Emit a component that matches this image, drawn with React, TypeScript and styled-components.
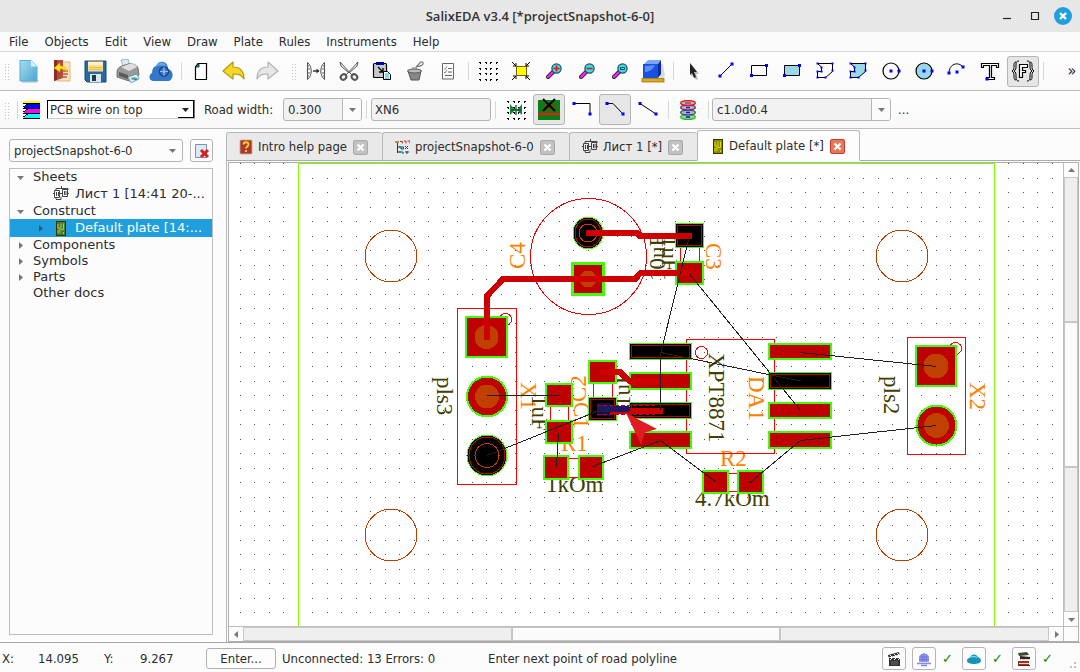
import React from 'react';
import styled, { createGlobalStyle, css } from 'styled-components';

const UI = '"DejaVu Sans Condensed", "DejaVu Sans", sans-serif';
const WIDE = '"DejaVu Sans", sans-serif';
const SERIF = '"Liberation Serif", "Times New Roman", serif';

const Global = createGlobalStyle`
  * { box-sizing: border-box; }
  html, body, #root { height: 100%; margin: 0; }
  body { background: #fcfcfc; color: #2c2c2c; font: 13px/16px ${UI}; overflow: hidden; }
  button, input, select { font: inherit; color: inherit; }
  button { padding: 0; border: 0; background: none; }
  svg { display: block; }
`;

const Window = styled.div`
  display: flex;
  flex-direction: column;
  height: 100vh;
`;

const TitleBar = styled.header`
  position: relative;
  display: flex;
  align-items: center;
  justify-content: center;
  flex: none;
  height: 32px;
  background: #e7e7e7;
`;

const Title = styled.h1`
  margin: 0;
  font: 600 13px/16px "Open Sans", sans-serif;
  color: #333;
`;

const WindowButtons = styled.div`
  position: absolute;
  right: 8px;
  top: 7px;
  display: flex;
  gap: 10px;
`;

const WindowButton = styled.button<{ $close?: boolean }>`
  width: 18px;
  height: 18px;
  border-radius: 9px;
  background: ${p => (p.$close ? '#209fdf' : 'transparent')};
`;

const MenuBar = styled.nav`
  display: flex;
  flex: none;
  align-items: center;
  gap: 16px;
  height: 20px;
  padding-left: 9px;
  border-bottom: 1px solid #d6d6d6;
  background: #fbfbfb;
`;

const MenuButton = styled.button`
  height: 16px;
`;

const Toolbar = styled.div<{ $short?: boolean }>`
  display: flex;
  flex: none;
  align-items: center;
  height: ${p => (p.$short ? 38 : 39)}px;
  padding-left: 5px;
  border-bottom: 1px solid #bdbdbd;
  background: linear-gradient(#fefefe, #f9f9f9);
`;

const Grip = styled.span<{ $inner?: boolean }>`
  flex: none;
  width: 5px;
  height: 18px;
  margin: ${p => (p.$inner ? '0 3px 0 8px' : '0 3px 0 0')};
  background-image: linear-gradient(#fcfcfc 2px, transparent 2px), linear-gradient(90deg, #c4c4c4 1px, transparent 1px);
  background-size: 3px 3px;
`;

const Divider = styled.span<{ $gap?: number }>`
  flex: none;
  width: 1px;
  height: 18px;
  margin: 0 ${p => p.$gap ?? 3}px;
  background: #d8d8d8;
`;

const IconButton = styled.button<{ $on?: boolean }>`
  display: flex;
  flex: none;
  align-items: center;
  justify-content: center;
  width: 32px;
  height: 31px;
  margin-right: 1px;
  border-radius: 3px;
  ${p => p.$on && css`
    border: 1px solid #b4b4b4;
    background: #e6e6e6;
  `}
`;

const Overflow = styled.button`
  width: 16px;
  height: 24px;
  margin-left: auto;
  font: 16px/20px ${UI};
`;

const LayerSelect = styled.select`
  width: 148px;
  height: 19px;
  margin-left: 7px;
  padding: 0 2px;
  appearance: none;
  border: 1px solid #000;
  border-right-color: #777;
  border-bottom-color: #ccc;
  border-radius: 0;
  background: #fff;
`;

const ComboBox = styled.span<{ $width: number }>`
  position: relative;
  display: flex;
  flex: none;
  width: ${p => p.$width}px;
`;

const ComboArrow = styled.span<{ $split?: boolean; $raised?: boolean }>`
  position: absolute;
  top: 1px;
  right: 1px;
  bottom: 1px;
  display: flex;
  align-items: center;
  justify-content: center;
  width: ${p => (p.$raised ? 16 : 19)}px;
  pointer-events: none;
  color: #777;
  ${p => p.$split && css`
    border-left: 1px solid #b8b8b8;
    background: #fbfbfb;
    border-radius: 0 2px 2px 0;
  `}
  ${p => p.$raised && css`
    color: #222;
    border-right: 1px solid #000;
    border-bottom: 1px solid #000;
    background: #fff;
  `}
`;

const Select = styled.select<{ $white?: boolean }>`
  width: 100%;
  height: 23px;
  padding: 0 4px;
  appearance: none;
  border: 1px solid #b4b4b4;
  border-radius: 3px;
  background: ${p => (p.$white ? '#fcfcfc' : '#f2f2f2')};
`;

const TextBox = styled.input`
  width: 120px;
  height: 23px;
  padding: 0 3px;
  border: 1px solid #b4b4b4;
  border-radius: 3px;
  background: #f2f2f2;
`;

const FieldLabel = styled.label`
  margin: 0 9px;
  width: 70px;
  white-space: nowrap;
`;

const MoreButton = styled.button`
  margin-left: 7px;
`;

const Main = styled.main`
  display: flex;
  flex: 1;
  min-height: 0;
`;

const SidePanel = styled.aside`
  display: flex;
  flex-direction: column;
  flex: none;
  width: 226px;
  padding: 10px 13px 7px 9px;
`;

const SnapshotRow = styled.div`
  display: flex;
  gap: 7px;
  margin-bottom: 6px;
`;

const SmallButton = styled.button`
  display: flex;
  align-items: center;
  justify-content: center;
  width: 24px;
  height: 23px;
  border: 1px solid #b4b4b4;
  border-radius: 3px;
  background: #fdfdfd;
`;

const Tree = styled.ul`
  flex: 1;
  margin: 0;
  padding: 0;
  list-style: none;
  border: 1px solid #bdbdbd;
  background: #fcfcfc;
  font: 13px/16px ${WIDE};
`;

const TreeRow = styled.li<{ $level: number; $selected?: boolean; $icon?: boolean }>`
  display: flex;
  align-items: center;
  height: ${p => (p.$icon ? 18 : 16)}px;
  padding-left: ${p => p.$level * 20 + 5}px;
  color: ${p => (p.$selected ? '#fff' : 'inherit')};
  background: ${p => (p.$selected ? '#209fdf' : 'transparent')};
`;

const TreeArrow = styled.span<{ $dark?: boolean }>`
  flex: none;
  display: flex;
  justify-content: center;
  width: 10px;
  margin-right: 8px;
  color: ${p => (p.$dark ? '#1b5f86' : '#777')};
`;

const TreeIcon = styled.span`
  flex: none;
  display: flex;
  justify-content: center;
  width: 16px;
  margin-right: 6px;
`;

const TreeText = styled.span`
  white-space: nowrap;
`;

const Editor = styled.section`
  display: flex;
  flex-direction: column;
  flex: 1;
  min-width: 0;
`;

const TabBar = styled.div`
  display: flex;
  flex: none;
  align-items: flex-end;
  height: 32px;
  box-shadow: inset 0 -1px #acacac;
`;

const Tab = styled.div<{ $active?: boolean }>`
  display: flex;
  align-items: center;
  gap: 6px;
  height: ${p => (p.$active ? 31 : 29)}px;
  padding: ${p => (p.$active ? '1px 14px 0 14px' : '1px 14px 0 12px')};
  border: 1px solid #b8b8b8;
  border-right-width: ${p => (p.$active ? 1 : 0)}px;
  border-bottom-color: ${p => (p.$active ? '#fff' : '#acacac')};
  border-radius: 3px 3px 0 0;
  background: ${p => (p.$active ? '#fdfdfd' : '#e9e9e9')};
`;

const TabLabel = styled.button`
  display: flex;
  align-items: center;
  gap: 5px;
  white-space: nowrap;
`;

const CloseTab = styled.button<{ $hot?: boolean }>`
  display: flex;
  align-items: center;
  justify-content: center;
  width: 15px;
  height: 15px;
  border: 1px solid ${p => (p.$hot ? '#cc3b2a' : '#a8a8a8')};
  border-radius: 2px;
  background: ${p => (p.$hot ? '#e07a58' : '#c2c2c2')};
`;

const Pane = styled.div`
  display: flex;
  flex: 1;
  min-height: 0;
  padding: 1px 1px 0;
  border-left: 1px solid #b8b8b8;
`;

const ScrollArea = styled.div`
  display: grid;
  flex: 1;
  min-width: 0;
  grid-template-columns: minmax(0, 1fr) 15px;
  grid-template-rows: minmax(0, 1fr) 15px;
  border: 1px solid #b0b0b0;
  background: #fff;
`;

const Board = styled.svg`
  width: 100%;
  height: 100%;
  overflow: hidden;
`;

const Scrollbar = styled.div<{ $vertical?: boolean }>`
  display: flex;
  flex-direction: ${p => (p.$vertical ? 'column' : 'row')};
  background: #efefef;
  border: 0 solid #bdbdbd;
  border-left-width: ${p => (p.$vertical ? 1 : 0)}px;
  border-top-width: ${p => (p.$vertical ? 0 : 1)}px;
`;

const ScrollButton = styled.button`
  display: flex;
  flex: none;
  align-items: center;
  justify-content: center;
  width: 14px;
  height: 14px;
  background: #fcfcfc;
  color: #777;
`;

const ScrollTrack = styled.div`
  flex: 1;
  box-shadow: inset 0 0 0 1px #c8c8c8;
`;

const ScrollThumb = styled.div`
  flex: 1;
  background: #fbfbfb;
  box-shadow: inset 0 0 0 1px #c4c4c4;
`;

const ScrollCorner = styled.div`
  border: 1px solid #bdbdbd;
  border-width: 1px 0 0 1px;
  background: #fcfcfc;
`;

const StatusBar = styled.footer`
  display: flex;
  flex: none;
  align-items: center;
  height: 30px;
  padding: 2px 2px 0;
  border-top: 1px solid #a8a8a8;
`;

const StatusText = styled.span<{ $width: number }>`
  flex: none;
  width: ${p => p.$width}px;
  white-space: nowrap;
`;

const EnterButton = styled.button`
  width: 70px;
  height: 21px;
  margin-right: 6px;
  border: 1px solid #b0b0b0;
  border-radius: 3px;
  background: #fdfdfd;
`;

const StatusTools = styled.div`
  display: flex;
  align-items: center;
  gap: 6px;
  margin-left: auto;
`;

const Check = styled.span`
  width: 14px;
  color: #0a820a;
  font: bold 13px/16px ${WIDE};
`;

const SizeGrip = styled.span`
  align-self: flex-end;
  width: 16px;
  height: 12px;
  background-image: radial-gradient(circle at 1px 1px, #c0c0c0 1px, transparent 1px);
  background-size: 4px 4px;
  clip-path: polygon(100% 0, 100% 100%, 20% 100%);
`;

const Ico = ({ children, s = 24 }: { children: React.ReactNode; s?: number }) => (
  <svg width={s} height={s} viewBox={`0 0 ${s} ${s}`} fill="none" aria-hidden="true">{children}</svg>
);

const Triangle = ({ dir = 'down' }: { dir?: 'down' | 'up' | 'left' | 'right' }) => {
  const d = { down: 'M1 3h7l-3.5 4z', up: 'M1 6h7L4.500 2z', left: 'M6 1v7L2 4.500z', right: 'M3 1v7l4-3.500z' }[dir];
  return <svg width="9" height="9" viewBox="0 0 9 9"><path d={d} fill="currentColor" /></svg>;
};

const Knots = ({ at }: { at: number[][] }) => (
  <>{at.map(([x, y], i) => <rect key={i} x={x - 1.5} y={y - 1.5} width="3" height="3" fill="#0000ff" />)}</>
);

const Dots = () => (
  <g fill="#000" shapeRendering="crispEdges">
    {[3, 9, 14, 20].map(x => [3, 9, 14, 20].map(y => <path key={`${x}-${y}`} d={`M${x} ${y}h2v1h-2zM${x + (x < 10 ? 1 : 0)} ${y + 1}h1v1h-1z`} />))}
  </g>
);

const NewDoc = () => (
  <Ico>
    <defs><linearGradient id="nd" x1="0" y1="0" x2="1" y2="1"><stop stopColor="#a8dcf2" /><stop offset="1" stopColor="#4ba6cf" /></linearGradient></defs>
    <path d="M4 21h18l-2 3H5z" fill="#bbb" opacity=".6" />
    <path d="M3 1.500h11l6 6v14.500H3z" fill="url(#nd)" stroke="#59aed4" /><path d="M14 1.500v6h6z" fill="#d8f0fa" />
  </Ico>
);
const OpenDoc = () => (
  <Ico>
    <path d="M7 3h13v19H7z" fill="#f6e2bb" stroke="#e0b878" /><path d="M4 1h9v18l-9 3z" fill="#b0483c" /><path d="M4 1h3v20l-3 1z" fill="#8a2c26" />
    <path d="M12 12h6M12 15h6M12 18h5" stroke="#c4583a" strokeWidth="1.300" /><path d="M4 9l6-5v3c5 0 7 2 7 6-2-3-4-3-7-3v3z" fill="#ffe21a" stroke="#d8a800" strokeWidth=".6" />
  </Ico>
);
const Save = () => (
  <Ico>
    <path d="M2 2h21v21H4l-2-2z" fill="#2468a4" stroke="#174a78" /><path d="M5 2.500h15v10H5z" fill="#fbe08b" /><path d="M5 3h15v3H5z" fill="#fff2bd" /><path d="M6 8.500h13M6 10.500h13" stroke="#e6b94e" />
    <path d="M7 15h11v8H7z" fill="#dfe5ec" /><path d="M9 16h4v6H9z" fill="#1c3a57" />
  </Ico>
);
const Print = () => (
  <Ico>
    <path d="M5 1l7-1 2 8-6 2z" fill="#dcebf6" stroke="#8da2b5" strokeWidth=".8" /><path d="M1 13c0-3 2-5 5-6l6-2c4-1 9 1 10 4l1 7-10 6L1 18z" fill="#9a9a9a" stroke="#5c5c5c" strokeWidth=".8" />
    <path d="M5 8l8-3c4-1 7 1 8 3l-8 4z" fill="#dedede" /><path d="M3 13l9 3v4l-9-3z" fill="#5b5b5b" /><path d="M12 18l9-3 2 5-8 4z" fill="#dceaff" stroke="#58a" strokeWidth=".7" /><path d="M15 19l4-1 1 2-4 1z" fill="#5ab546" /><path d="M18 20l3-1 .5 1.500-3 1z" fill="#3b6ee0" />
  </Ico>
);
const Cloud = () => (
  <Ico>
    <path d="M4 22c-4 0-5-6-1-8 0-3 1-6 4-7 2-6 12-6 12 3 6 1 6 10 1 12z" fill="#3277c9" /><path d="M7 8c2-6 9-6 11 1-3-3-8-3-11-1z" fill="#6ea4e2" />
    <circle cx="15" cy="12.500" r="4.500" fill="none" stroke="#1a4380" strokeWidth="1.500" /><circle cx="15" cy="12.500" r="1.500" fill="#9cc2ee" /><path d="M15 8v3M11 12.500h2.500M16.500 12.500H19M15 14v3" stroke="#9cc2ee" />
  </Ico>
);
const Blank = () => (
  <Ico><path d="M9 4.500h8.500v16h-11V8z" fill="#fff" stroke="#000" strokeWidth="1.200" /><path d="M6 8l4-4v4z" fill="#0a8a8a" stroke="#000" strokeWidth=".7" /></Ico>
);
const Curl = ({ a, b }: { a: string; b: string }) => (
  <path d="M1 12L11 3v5c7 0 11 4 11 12-3-5-6-5-11-5v5z" fill={a} stroke={b} strokeWidth="1.200" strokeLinejoin="round" />
);
const Undo = () => <Ico><Curl a="#f5d820" b="#b39a16" /></Ico>;
const Redo = () => <Ico><g transform="matrix(-1 0 0 1 24 0)"><Curl a="#e6e6e6" b="#b5b5b5" /></g></Ico>;
const Mirror = () => (
  <Ico><path d="M3.500 3.500c5 4 5 13 0 17zM20.500 3.500c-5 4-5 13 0 17zM3 7h2M3 10h3M3 14h3M3 17h2M21 7h-2M21 10h-3M21 14h-3M21 17h-2" stroke="#555" /><path d="M9 12h6" stroke="#333" strokeWidth="1.500" /><path d="M12.500 9.500l3 2.500-3 2.500z" fill="#333" /></Ico>
);
const Cut = () => (
  <Ico><path d="M3 3l12 13M21 3L9 16M3 3l1 4 8 7M21 3l-1 4-8 7" stroke="#555" /><ellipse cx="6.500" cy="18" rx="3" ry="2.500" stroke="#555" strokeWidth="2" transform="rotate(-40 6.500 18)" /><ellipse cx="17.500" cy="18" rx="3" ry="2.500" stroke="#555" strokeWidth="2" transform="rotate(40 17.500 18)" /></Ico>
);
const Paste = () => (
  <Ico><rect x="3.500" y="4.500" width="13" height="14" rx="1" fill="#c8c8c8" stroke="#000" strokeWidth="1.200" /><path d="M6 3h8v3H6z" fill="#0000a8" /><path d="M8 8l5 5M13 9v4H9" stroke="#000" strokeWidth="1.300" />
    <path d="M13.500 12.500h4l3 3v5h-7z" fill="#fff" stroke="#000" /><path d="M15 15h4M15 17h4M15 19h4" stroke="#00b8d4" /></Ico>
);
const Bucket = () => (
  <Ico><path d="M5 12h13l-2 9H8z" fill="#888" stroke="#555" /><ellipse cx="11.500" cy="12" rx="7" ry="2" fill="#bbb" stroke="#555" /><path d="M13 8l4-4c1-2 4-1 3 1s-5 3-6 2M9 9l5 0" stroke="#777" strokeWidth="1.200" /></Ico>
);
const ListIcon = () => (
  <Ico><path d="M6.500 4.500h11v15.500h-11zM12 9.500h4M12 13h4M9 16.500h7" stroke="#666" /><path d="M8 9.500l1 1 2-3M8 13l1 1 2-3" stroke="#888" /></Ico>
);
const GridIcon = () => <Ico><Dots /></Ico>;
const Fit = () => (
  <Ico><rect x="7.500" y="7.500" width="10" height="9" fill="#ffff00" stroke="#806000" /><path d="M3 3l4 4M21 3l-4 4M3 21l4-4M21 21l-4-4M7 4v3H4M17 4v3h3M7 20v-3H4M17 20v-3h3" stroke="#000" /></Ico>
);
const Lens = ({ children }: { children: React.ReactNode }) => (
  <Ico><path d="M6 18l5-5" stroke="#222" strokeWidth="4" strokeLinecap="round" /><path d="M6 18l5-5" stroke="#ff20ff" strokeWidth="2.400" strokeLinecap="round" /><circle cx="14.500" cy="9.500" r="4.600" fill="#35dfe4" stroke="#1c4a66" strokeWidth="1.200" />{children}</Ico>
);
const Cube = () => (
  <Ico><path d="M14 5h8l2 12-4 3z" fill="#ccc" opacity=".7" /><path d="M3 5l4-4h13l-3 4z" fill="#7aa6ff" /><path d="M2 5h15v14H2z" fill="#1a4fe0" /><path d="M17 5l3-4v14l-3 4z" fill="#0a2c9c" /><path d="M4 7c5 0 8-1 10-1-2 5-7 7-10 7z" fill="#5d8ff7" /><rect x="1" y="19.500" width="22" height="3.500" fill="#e0a81e" stroke="#8c6508" strokeWidth=".7" /></Ico>
);
const Pointer = () => <Ico><path d="M11 6l7 9h-3l2 5-2 1-3-5-2 2z" fill="#bbb" /><path d="M9 4l7 9h-3l2 5-2 1-2-5-2 2z" fill="#222" /></Ico>;
const LineIcon = () => <Ico><path d="M6 17L18 5" stroke="#000" /><Knots at={[[6, 17], [18, 5]]} /></Ico>;
const RectIcon = ({ fill = 'none' }: { fill?: string }) => <Ico><path d="M4.500 6.500h15v10h-15z" stroke="#000" fill={fill} /><Knots at={[[4.500, 16.500], [19.500, 6.500]]} /></Ico>;
const PolyIcon = ({ fill = 'none' }: { fill?: string }) => (
  <Ico>
    <path d="M4.500 4.500h15v8l-7 6h-8v-6h4V8z" stroke="#000" fill={fill} />
    {[[4.500, 4.500], [19.500, 4.500], [19.500, 11.500], [12.500, 18.500], [4.500, 18.500], [4.500, 12.500], [8.500, 12.500], [8.500, 8.500]].map(([x, y], i) => <rect key={i} x={x - 1} y={y - 1} width="2" height="2" fill="#0000ff" />)}
  </Ico>
);
const CircleIcon = ({ fill = 'none' }: { fill?: string }) => <Ico><circle cx="12" cy="12" r="8" stroke="#000" strokeWidth="1.200" fill={fill} /><Knots at={[[12, 12], [20, 12]]} /></Ico>;
const ArcIcon = () => <Ico><path d="M4 14c0-9 9-12 14-6" stroke="#000" /><Knots at={[[4, 14], [18, 8], [12, 13]]} /></Ico>;
const TIcon = () => <Ico><path d="M3.500 4.500h17v4h-2v-2h-5v12h3v2h-8v-2h3v-12h-6v2h-2z" stroke="#000" fill="#fff" strokeWidth="1.200" /><Knots at={[[9, 20]]} /></Ico>;
const FIcon = () => (
  <Ico><path d="M5 3c-2 0-2 2-2 4s0 4-2 5c2 1 2 3 2 5s0 4 2 4M8 2c-3 0-3 2-3 5 0 2 0 4-2 5 2 1 2 3 2 5 0 3 0 5 3 5M19 3c2 0 2 2 2 4s0 4 2 5c-2 1-2 3-2 5s0 4-2 4M16 2c3 0 3 2 3 5 0 2 0 4 2 5-2 1-2 3-2 5 0 3 0 5-3 5" stroke="#000" />
    <path d="M8.500 5.500h8v3h-5v3h3v2h-3v5h-3z" stroke="#000" fill="#fff" strokeWidth="1.200" /></Ico>
);
const LayersIcon = () => (
  <svg width="18" height="18" viewBox="0 0 18 18" shapeRendering="crispEdges">
    <path d="M2 0h16v2H0z" fill="#ffff00" />
    {['#0000ff', '#ff00ff', '#00ffff'].map((c, i) => <path key={c} d={`M6 ${i * 5 + 3}h12v4H1z`} fill={c} />)}
    <path d="M1 2h17M1 7h17M1 12h17M1 17h17M1 6l5-3M1 11l5-3M1 16l5-3" stroke="#000" fill="none" />
  </svg>
);
const RatsIcon = () => (
  <Ico><Dots /><path d="M6 6l5 6-5 5zM18 6l-5 6 5 5z" fill="#128a3a" /><path d="M7 12h10M12 7v10" stroke="#0a5a24" strokeWidth="1.300" /></Ico>
);
const ViaOff = () => (
  <Ico><rect x="1" y="2" width="22" height="20" fill="#0a7d16" /><rect x="1" y="15" width="22" height="2" fill="#ff1010" /><rect x="6" y="7" width="12" height="5" fill="#6b4a10" /><path d="M6 1l12 12M18 1L6 13" stroke="#000" strokeWidth="2" /></Ico>
);
const Bend1 = () => <Ico><path d="M4 5.500h16V16" stroke="#000" /><Knots at={[[4, 5.500], [20, 16]]} /></Ico>;
const Bend2 = () => <Ico><path d="M4 5.500h6L20 16" stroke="#000" /><Knots at={[[4, 5.500], [20, 16]]} /></Ico>;
const Bend3 = () => <Ico><path d="M4 5.500L20 16" stroke="#000" /><Knots at={[[4, 5.500], [20, 16]]} /></Ico>;
const StackIcon = () => (
  <Ico>{[['#10d010', 19], ['#3c5a70', 14.5], ['#70307a', 9.5], ['#e01010', 5]].map(([c, y]) => <ellipse key={c} cx="12" cy={y} rx="7.300" ry="2.400" fill="#b8b8b8" stroke={c as string} strokeWidth="1.400" />)}<path d="M10 9.500h4M10 14.500h4M10 19h4" stroke="#1010ff" strokeWidth="1.500" /><path d="M9 5h6" stroke="#a01010" /></Ico>
);
const HelpIcon = () => (
  <svg width="14" height="16" viewBox="0 0 14 16"><rect x="1" y="1" width="12" height="14" rx="1" fill="#a83a36" stroke="#d9a37a" strokeWidth=".8" /><path d="M4.500 5.500c0-3 5-3 5 0 0 2-2.500 2-2.500 4M7 11v2" stroke="#ffd21a" strokeWidth="1.800" fill="none" /></svg>
);
const ProjIcon = () => (
  <svg width="15" height="15" viewBox="0 0 15 15"><path d="M1 2h3M2.500 2v11M2.500 7h3M2.500 12h3" stroke="#333" fill="none" /><rect x="0" y="1" width="3" height="2" fill="#b0a000" /><path d="M5 1.500h2.500v2M9 1h2v2.500M12.500 1H15v2.500" stroke="#b03030" fill="none" /><path d="M6 7h2.500v2H6zM10 6l3 3M13 6l-3 3M6 12h2v2M10 12h4M12 11v3" stroke="#1c4a50" fill="none" /><rect x="4" y="6" width="2" height="2" fill="#0a9a9a" /><rect x="4" y="11" width="2" height="2" fill="#0a9a9a" /></svg>
);
const SheetIcon = () => (
  <svg width="16" height="16" viewBox="0 0 16 16"><path d="M1.500 4.500h5v7h-5zM9.500 3.500h5v7h-5zM3.500 6v4M5.500 6v4M11.500 5v4M13 5v4M0 7.500h2M6 7.500h4M8.500 0v3M3 4V2.500h12V4M14 7.500h2M3 13.500h5v-3M3 11v2" stroke="#444" fill="none" /></svg>
);
const PlateIcon = ({ c = '#4f7d26', l = '#9dc860' }: { c?: string; l?: string }) => (
  <svg width="12" height="15" viewBox="0 0 12 15"><rect x="1.500" y=".5" width="9" height="14" fill={c} stroke="#333800" /><path d="M3 3v4h2v5M6 2.500v5M8.500 2.500v6H6M3 9v3.500M8.500 11v2" stroke={l} fill="none" /></svg>
);
const Cross = () => <svg width="9" height="9" viewBox="0 0 9 9"><path d="M1.500 1.500l6 6M7.500 1.500l-6 6" stroke="#fff" strokeWidth="2.200" /></svg>;

/* Board drawing */
const GREEN = '#40ff00';
const COPPER = '#bf0000';
const TRACK = '#cf0000';
const DRILL = '#bf4000';

type PadProps = { x: number; y: number; w: number; h: number; b?: number; off?: boolean; drill?: number };
const Pad = ({ x, y, w, h, b = 2, off, drill }: PadProps) => (
  <g>
    <rect x={x} y={y} width={w} height={h} fill={GREEN} />
    {off ? (
      <>
        <rect x={x + 1} y={y + 1} width={w - 2} height={h - 2} fill="#000" />
        <rect x={x + 2.5} y={y + 2.5} width={w - 5} height={h - 5} fill="none" stroke="#c00000" />
      </>
    ) : <rect x={x + b} y={y + b} width={w - 2 * b} height={h - 2 * b} fill={COPPER} />}
    {drill && <circle cx={x + w / 2} cy={y + h / 2} r={drill} fill={DRILL} />}
  </g>
);
const RoundPad = ({ x, y, r, rx = r, off, drill }: { x: number; y: number; r: number; rx?: number; off?: boolean; drill: number }) => (
  <g>
    <ellipse cx={x} cy={y} rx={rx} ry={r} fill={GREEN} />
    {off ? (
      <>
        <ellipse cx={x} cy={y} rx={rx - 1} ry={r - 1} fill="#000" />
        <ellipse cx={x} cy={y} rx={rx - 2.5} ry={r - 2.5} fill="none" stroke="#c00000" />
        <circle cx={x} cy={y} r={drill} fill="none" stroke={DRILL} />
      </>
    ) : (
      <>
        <circle cx={x} cy={y} r={r - 2} fill={COPPER} />
        <circle cx={x} cy={y} r={drill} fill={DRILL} />
      </>
    )}
  </g>
);
const Silk = ({ x, y, a = 0, name, children }: { x: number; y: number; a?: number; name?: boolean; children: string }) => (
  <text transform={`translate(${x} ${y}) rotate(${a})`} fontFamily={SERIF} fontSize="23" fill={name ? '#ff8000' : '#404000'}>{children}</text>
);

const gridX = Array.from({ length: 120 }, (_, i) => Math.floor(240.3 + (i - 1) * 14.5));
const gridY = Array.from({ length: 80 }, (_, i) => Math.floor(178.4 + (i - 1) * 14.483));
const gridPath = gridY.map(y => gridX.map(x => `M${x} ${y}h1v1h-1z`).join('')).join('');

const PlateDrawing = () => (
  <Board role="img" aria-label="Default plate">
    <g transform="translate(-229 -163)" shapeRendering="crispEdges">
      <path d={gridPath} fill="#555" />
      <path d="M298.500 900V163.500H994.500V900" fill="none" stroke="#80ff00" />
      {[[391, 256], [902, 256], [391, 535], [902, 535]].map(([x, y]) => <circle key={`${x}-${y}`} cx={x} cy={y} r="26" fill="none" stroke="#b84000" />)}
      <g>
        <Silk x={525} y={269} a={-90} name>C4</Silk>
        <Silk x={706} y={243} a={90} name>C3</Silk>
        <Silk x={665} y={281} a={-90}>10uF</Silk>
        <Silk x={662} y={236} a={90}>1uF</Silk>
        <Silk x={521} y={382} a={90} name>X1</Silk>
        <Silk x={586} y={402} a={-90} name>C2</Silk>
        <Silk x={574} y={402} a={90} name>C1</Silk>
        <Silk x={532} y={395} a={90}>1uF</Silk>
        <Silk x={630} y={407} a={-90}>1uF</Silk>
        <Silk x={437} y={377} a={90}>pls3</Silk>
        <Silk x={884} y={376} a={90}>pls2</Silk>
        <Silk x={970} y={382} a={90} name>X2</Silk>
        <Silk x={709} y={353} a={90}>XPT8871</Silk>
        <Silk x={749} y={376} a={90} name>DA1</Silk>
        <Silk x={561} y={451} name>R1</Silk>
        <Silk x={720} y={466} name>R2</Silk>
        <Silk x={546} y={492}>1kOm</Silk>
        <Silk x={695} y={506}>4.7kOm</Silk>
      </g>
      <g fill="none" stroke="#ff0000">
        <circle cx="588.500" cy="256.500" r="58" stroke="#e80000" />
        <path d="M457.500 308.500h59v176h-59zM907.500 337.500h58v117h-58zM686.500 339.500h88v114h-88z" />
        <circle cx="505.500" cy="319.500" r="6" /><circle cx="955.500" cy="348.500" r="6" /><circle cx="701.500" cy="352.500" r="6" />
        <path d="M680.500 247v15M699.500 247v15M593.500 383v15M612.500 383v15M550.500 406v15M568.500 406v15M568 458.500h11M568 477.500h11M728 473.500h10M728 491.500h10" />
      </g>
      <RoundPad x={588} y={233} r={16.5} rx={15.5} drill={9} off />
      <Pad x={571} y={262} w={34} h={34} b={3} drill={8.5} />
      <Pad x={675} y={223} w={29} h={25} off />
      <Pad x={675} y={261} w={29} h={24} />
      <Pad x={465} y={316} w={43} h={42} drill={12} />
      <RoundPad x={487} y={396.5} r={21} drill={12} />
      <RoundPad x={487} y={455.5} r={21} rx={20.5} drill={12} off />
      <Pad x={915} y={345} w={42} h={42} drill={12.5} />
      <RoundPad x={936.5} y={425.5} r={21} drill={12.5} />
      <Pad x={545} y={383} w={28} h={24} />
      <Pad x={545} y={420} w={28} h={24} />
      <Pad x={588} y={360} w={29} h={24} />
      <Pad x={588} y={397} w={29} h={24} off />
      <Pad x={543} y={455} w={26} h={25} />
      <Pad x={578} y={455} w={26} h={25} />
      <Pad x={702} y={470} w={27} h={24} />
      <Pad x={737} y={470} w={27} h={24} />
      <Pad x={629} y={343} w={63} h={17} off />
      <Pad x={629} y={372} w={63} h={18} />
      <Pad x={629} y={402} w={63} h={17} off />
      <Pad x={629} y={431} w={63} h={18} />
      <Pad x={768} y={343} w={64} h={17} />
      <Pad x={768} y={372} w={64} h={18} off />
      <Pad x={768} y={402} w={64} h={17} />
      <Pad x={768} y={431} w={64} h={18} />
      <g fill="none" stroke={TRACK} strokeWidth="6" strokeLinejoin="round">
        <path d="M586 233h51l3 3h52" />
        <path d="M487 340v-44l16-17h132l6-6.500h50" />
        <path d="M600 372h20l10 9.500h32" />
        <path d="M603 410.500h60" />
      </g>
      <path d="M597 403h13v13h-13z" fill="#181038" />
      <path d="M600 409h27" stroke="#201860" strokeWidth="6" strokeLinecap="round" />
      <path d="M597 405.500h59M597 414.500h59" stroke="#b00038" strokeDasharray="4 2" />
      <g fill="none" stroke="#202020">
        <path d="M689.500 236L661 352M660.500 352v58M689.500 274L800.500 410.500M661 352.500L800.500 381M800.500 352.500L936.500 366.500" />
        <path d="M487 395.500h73M487 455.500L603 409M558.500 433l-2 34M591.500 467L660.500 440.500 716.500 482.500M750 482.500L800.500 440.500 936.500 425.500" />
      </g>
      <path d="M626 413l31 16-12 3.500-4 12z" fill="#e01b24" shapeRendering="auto" />
    </g>
  </Board>
);

export default function App() {
  return (
    <Window>
      <Global />
      <TitleBar>
        <Title>SalixEDA v3.4 [*projectSnapshot-6-0]</Title>
        <WindowButtons>
          <WindowButton aria-label="Minimize"><svg width="18" height="18"><path d="M5 11.500h8" stroke="#222" strokeWidth="1.200" /></svg></WindowButton>
          <WindowButton aria-label="Maximize"><svg width="18" height="18"><path d="M5.500 5.500h7v7h-7z" fill="none" stroke="#222" strokeWidth="1.200" /></svg></WindowButton>
          <WindowButton $close aria-label="Close"><svg width="18" height="18"><path d="M6 6l6 6M12 6l-6 6" stroke="#fff" strokeWidth="2.400" /></svg></WindowButton>
        </WindowButtons>
      </TitleBar>
      <MenuBar>
        {['File', 'Objects', 'Edit', 'View', 'Draw', 'Plate', 'Rules', 'Instruments', 'Help'].map(m => <MenuButton key={m}>{m}</MenuButton>)}
      </MenuBar>
      <Toolbar>
        <Grip />
        <IconButton aria-label="New"><NewDoc /></IconButton>
        <IconButton aria-label="Open"><OpenDoc /></IconButton>
        <IconButton aria-label="Save"><Save /></IconButton>
        <IconButton aria-label="Print"><Print /></IconButton>
        <IconButton aria-label="Cloud"><Cloud /></IconButton>
        <Divider />
        <IconButton aria-label="Blank sheet"><Blank /></IconButton>
        <IconButton aria-label="Undo"><Undo /></IconButton>
        <IconButton aria-label="Redo"><Redo /></IconButton>
        <Grip $inner />
        <IconButton aria-label="Mirror"><Mirror /></IconButton>
        <IconButton aria-label="Cut"><Cut /></IconButton>
        <IconButton aria-label="Paste"><Paste /></IconButton>
        <IconButton aria-label="Delete"><Bucket /></IconButton>
        <IconButton aria-label="Properties"><ListIcon /></IconButton>
        <Divider />
        <IconButton aria-label="Grid"><GridIcon /></IconButton>
        <IconButton aria-label="Fit"><Fit /></IconButton>
        <IconButton aria-label="Zoom in"><Lens><path d="M11.500 9.500h6M14.500 6.500v6" stroke="#f01010" strokeWidth="1.600" /></Lens></IconButton>
        <IconButton aria-label="Zoom out"><Lens><path d="M11.500 9.500h6" stroke="#f01010" strokeWidth="1.600" /></Lens></IconButton>
        <IconButton aria-label="Zoom window"><Lens><path d="M12.500 8.500h4v2h-4z" stroke="#005060" /></Lens></IconButton>
        <IconButton aria-label="3D view"><Cube /></IconButton>
        <Divider />
        <IconButton aria-label="Select"><Pointer /></IconButton>
        <IconButton aria-label="Line"><LineIcon /></IconButton>
        <IconButton aria-label="Rectangle"><RectIcon /></IconButton>
        <IconButton aria-label="Filled rectangle"><RectIcon fill="#98d8e8" /></IconButton>
        <IconButton aria-label="Polygon"><PolyIcon /></IconButton>
        <IconButton aria-label="Filled polygon"><PolyIcon fill="#98d8e8" /></IconButton>
        <IconButton aria-label="Circle"><CircleIcon /></IconButton>
        <IconButton aria-label="Filled circle"><CircleIcon fill="#98d8e8" /></IconButton>
        <IconButton aria-label="Arc"><ArcIcon /></IconButton>
        <IconButton aria-label="Text"><TIcon /></IconButton>
        <IconButton $on aria-label="Fragment"><FIcon /></IconButton>
        <Divider />
        <Overflow>»</Overflow>
      </Toolbar>
      <Toolbar $short>
        <Grip />
        <Divider $gap={4} />
        <LayersIcon />
        <ComboBox $width={155}>
          <LayerSelect aria-label="Layer"><option>PCB wire on top</option></LayerSelect>
          <ComboArrow $raised><Triangle /></ComboArrow>
        </ComboBox>
        <FieldLabel htmlFor="road">Road width:</FieldLabel>
        <ComboBox $width={79}>
          <Select id="road"><option>0.300</option></Select>
          <ComboArrow $split><Triangle /></ComboArrow>
        </ComboBox>
        <Divider $gap={4} />
        <TextBox aria-label="Net name" defaultValue="XN6" />
        <Divider $gap={4} />
        <IconButton aria-label="Ratsnest"><RatsIcon /></IconButton>
        <IconButton $on aria-label="Via off"><ViaOff /></IconButton>
        <IconButton aria-label="Orthogonal"><Bend1 /></IconButton>
        <IconButton $on aria-label="45 degrees"><Bend2 /></IconButton>
        <IconButton aria-label="Free angle"><Bend3 /></IconButton>
        <Divider />
        <IconButton aria-label="Via stack"><StackIcon /></IconButton>
        <Divider />
        <ComboBox $width={179}>
          <Select aria-label="Via type"><option>c1.0d0.4</option></Select>
          <ComboArrow $split><Triangle /></ComboArrow>
        </ComboBox>
        <MoreButton>...</MoreButton>
      </Toolbar>
      <Main>
        <SidePanel>
          <SnapshotRow>
            <ComboBox $width={174}>
              <Select $white aria-label="Project"><option>projectSnapshot-6-0</option></Select>
              <ComboArrow><Triangle /></ComboArrow>
            </ComboBox>
            <SmallButton aria-label="Close project">
              <svg width="16" height="16" viewBox="0 0 16 16"><path d="M1.500 1.500h11v13h-11z" fill="#dbe8f5" stroke="#7c93ae" /><path d="M7 7l7 7M14 7l-7 7" stroke="#d81e1e" strokeWidth="3" /></svg>
            </SmallButton>
          </SnapshotRow>
          <Tree role="tree">
            <TreeRow role="treeitem" $level={0}><TreeArrow><Triangle /></TreeArrow><TreeText>Sheets</TreeText></TreeRow>
            <TreeRow role="treeitem" $level={1} $icon><TreeArrow /><TreeIcon><SheetIcon /></TreeIcon><TreeText>Лист 1 [14:41 20-...</TreeText></TreeRow>
            <TreeRow role="treeitem" $level={0}><TreeArrow><Triangle /></TreeArrow><TreeText>Construct</TreeText></TreeRow>
            <TreeRow role="treeitem" $level={1} $icon $selected aria-selected><TreeArrow $dark><Triangle dir="right" /></TreeArrow><TreeIcon><PlateIcon /></TreeIcon><TreeText>Default plate [14:...</TreeText></TreeRow>
            {['Components', 'Symbols', 'Parts'].map(t => (
              <TreeRow role="treeitem" $level={0} key={t}><TreeArrow><Triangle dir="right" /></TreeArrow><TreeText>{t}</TreeText></TreeRow>
            ))}
            <TreeRow role="treeitem" $level={0}><TreeArrow /><TreeText>Other docs</TreeText></TreeRow>
          </Tree>
        </SidePanel>
        <Editor>
          <TabBar role="tablist">
            <Tab><TabLabel role="tab"><HelpIcon />Intro help page</TabLabel><CloseTab aria-label="Close"><Cross /></CloseTab></Tab>
            <Tab><TabLabel role="tab"><ProjIcon />projectSnapshot-6-0</TabLabel><CloseTab aria-label="Close"><Cross /></CloseTab></Tab>
            <Tab><TabLabel role="tab"><SheetIcon />Лист 1 [*]</TabLabel><CloseTab aria-label="Close"><Cross /></CloseTab></Tab>
            <Tab $active><TabLabel role="tab" aria-selected><PlateIcon c="#8c8c00" l="#e0e000" />Default plate [*]</TabLabel><CloseTab $hot aria-label="Close"><Cross /></CloseTab></Tab>
          </TabBar>
          <Pane>
            <ScrollArea>
              <PlateDrawing />
              <Scrollbar $vertical>
                <ScrollButton aria-label="Scroll up"><Triangle dir="up" /></ScrollButton>
                <ScrollTrack /><ScrollThumb /><ScrollTrack />
                <ScrollButton aria-label="Scroll down"><Triangle /></ScrollButton>
              </Scrollbar>
              <Scrollbar>
                <ScrollButton aria-label="Scroll left"><Triangle dir="left" /></ScrollButton>
                <ScrollTrack /><ScrollThumb /><ScrollTrack />
                <ScrollButton aria-label="Scroll right"><Triangle dir="right" /></ScrollButton>
              </Scrollbar>
              <ScrollCorner />
            </ScrollArea>
          </Pane>
        </Editor>
      </Main>
      <StatusBar>
        <StatusText $width={36}>X:</StatusText>
        <StatusText $width={66}>14.095</StatusText>
        <StatusText $width={36}>Y:</StatusText>
        <StatusText $width={66}>9.267</StatusText>
        <EnterButton>Enter...</EnterButton>
        <StatusText $width={206}>Unconnected: 13 Errors: 0</StatusText>
        <StatusText $width={200}>Enter next point of road polyline</StatusText>
        <StatusTools>
          <SmallButton aria-label="Video"><svg width="16" height="16" viewBox="0 0 16 16"><path d="M3 7h11v8H3z" fill="#333" /><path d="M2 4l11-3 .6 2.500-11 3z" fill="#333" /><path d="M4 4l2 2M8 3l2 2M11 2l2 2M4 9l2-2M8 9l2-2M12 9l2-2" stroke="#fff" /><path d="M5 11h7M5 13h7" stroke="#999" strokeWidth=".6" /></svg></SmallButton>
          <SmallButton aria-label="Server"><svg width="16" height="16" viewBox="0 0 16 16"><path d="M3 11V7c0-6 10-6 10 0v4z" fill="#9aa0f0" /><path d="M3 6h10M3 8.500h10M6 3v8M8 2v9M10.500 3v8" stroke="#5560d8" strokeWidth=".6" /><path d="M1 12.500h14M5 14.500h6" stroke="#8088ee" strokeWidth="1.600" /></svg></SmallButton>
          <Check>✓</Check>
          <SmallButton aria-label="Cloud sync"><svg width="16" height="16" viewBox="0 0 16 16"><path d="M1 10c0-3 3-3 4-5 1-2 5-2 6 0 1 1 4 2 4 5 0 4-14 4-14 0z" fill="#1795b8" /><path d="M4 7c1-3 6-3 8 0-2-1-6-1-8 0z" fill="#7fd8ec" /></svg></SmallButton>
          <Check>✓</Check>
          <SmallButton aria-label="Library"><svg width="16" height="16" viewBox="0 0 16 16"><path d="M2 2l9-1 2 3-10 1z" fill="#3a4a30" /><path d="M4 5l10 1v3L4 8z" fill="#2c2420" /><path d="M4 8.500h10" stroke="#e8d8b0" /><path d="M2 10h11v4H2z" fill="#a03028" /><path d="M3 12.500h11" stroke="#f0d8b8" /><path d="M2 14.500h12" stroke="#602018" /></svg></SmallButton>
          <Check>✓</Check>
          <SizeGrip />
        </StatusTools>
      </StatusBar>
    </Window>
  );
}
